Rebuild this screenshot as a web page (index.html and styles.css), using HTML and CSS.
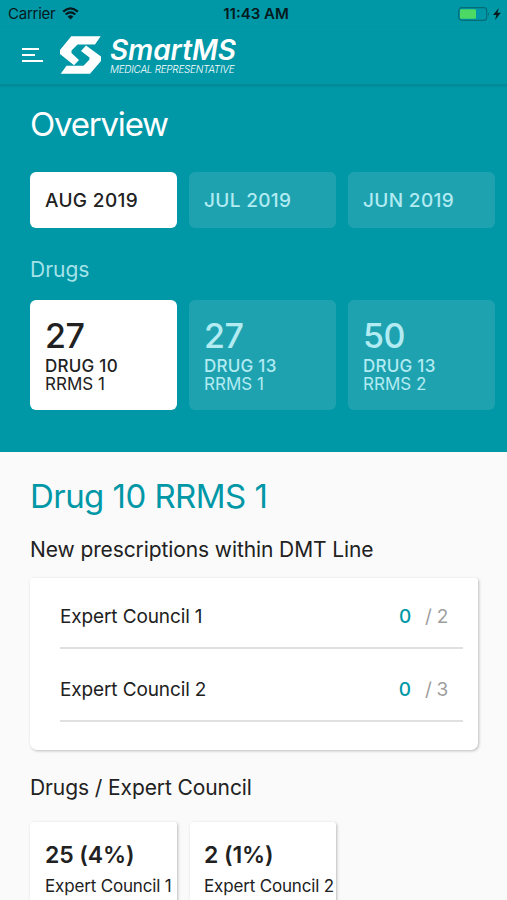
FILE: index.html
```
<!DOCTYPE html>
<html lang="en">

<head>
    <meta charset="UTF-8">
    <meta name="viewport" content="width=device-width, initial-scale=1.0">
    <title>SmartMS - Overview</title>

    <link rel="stylesheet" href="styles.css">
</head>

<body>

    <div class="status-bar">
        <div class="carrier">
            <span>Carrier</span>
            <svg width="17" height="13" viewBox="0 0 17 13">
                <path d="M1.2 4.7 Q8.5 -1.9 15.8 4.7" fill="none" stroke="#06191c" stroke-width="2.3" />
                <path d="M3.7 7.5 Q8.5 3.2 13.3 7.5" fill="none" stroke="#06191c" stroke-width="2.1" />
                <path d="M5.6 9.5 Q8.5 7 11.4 9.5 L8.5 12.4 Z" fill="#06191c" />
            </svg>
        </div>
        <span class="time">11:43 AM</span>
        <svg class="battery" width="44" height="14" viewBox="0 0 44 14">
            <rect x="0.7" y="0.7" width="28" height="12.6" rx="3" fill="none" stroke="#066d78" stroke-width="1.2" />
            <rect x="2" y="2.2" width="16" height="9.6" rx="1" fill="#4cd964" />
            <path d="M30 5 Q32 7 30 9 Z" fill="#066d78" />
            <path d="M40.8 1 L35 7.9 H38.4 L37 13 L42.8 5.8 H39.4 Z" fill="#06191c" />
        </svg>
    </div>

    <header class="navbar">
        <div class="menu">
            <span></span>
            <span class="short"></span>
            <span class="long"></span>
        </div>
        <svg class="logo" width="43" height="42" viewBox="0 0 43 42">
            <path d="M12.3 1.2 H41.7 L36 9.5 H18.5 L12.5 15.5 V18 L20 25 L15 30.2 L1 19 V15 Z" fill="#fff" />
            <path d="M27 10.5 L42 21.5 V26 L31 38.8 H1.7 L7.5 30.8 H24.5 L30.5 24.5 V22.5 L22 16 Z" fill="#fff" />
        </svg>
        <div class="brand">
            <span class="brand-name">SmartMS</span>
            <span class="brand-sub">MEDICAL REPRESENTATIVE</span>
        </div>
    </header>

    <section class="overview">
        <h1>Overview</h1>
        <div class="tiles">
            <div class="tile month active">AUG 2019</div>
            <div class="tile month">JUL 2019</div>
            <div class="tile month">JUN 2019</div>
        </div>
        <h2>Drugs</h2>
        <div class="tiles">
            <div class="tile drug active">
                <span class="count">27</span>
                <span class="drug-name">DRUG 10</span>
                <span class="drug-type">RRMS 1</span>
            </div>
            <div class="tile drug">
                <span class="count">27</span>
                <span class="drug-name">DRUG 13</span>
                <span class="drug-type">RRMS 1</span>
            </div>
            <div class="tile drug">
                <span class="count">50</span>
                <span class="drug-name">DRUG 13</span>
                <span class="drug-type">RRMS 2</span>
            </div>
        </div>
    </section>

    <main class="details">
        <h2 class="drug-title">Drug 10 RRMS 1</h2>
        <h3 class="lines-title">New prescriptions within DMT Line</h3>
        <div class="card">
            <div class="row">
                <span class="row-name">Expert Council 1</span>
                <span class="value">0</span>
                <span class="total">/ 2</span>
            </div>
            <div class="row">
                <span class="row-name">Expert Council 2</span>
                <span class="value">0</span>
                <span class="total">/ 3</span>
            </div>
        </div>
        <h3 class="council-title">Drugs / Expert Council</h3>
        <div class="tiles">
            <div class="stat">
                <span class="stat-value">25 (4%)</span>
                <span class="stat-name">Expert Council 1</span>
            </div>
            <div class="stat">
                <span class="stat-value">2 (1%)</span>
                <span class="stat-name">Expert Council 2</span>
            </div>
        </div>
    </main>

</body>

</html>
```

FILE: styles.css
```
* {
    box-sizing: border-box;
}

body {
    font-family: Inter, "Liberation Sans", sans-serif;
    margin: 0;
    height: 900px;
    overflow: hidden;
    background-color: #fafafa;
    color: #212121;
}

h1,
h2,
h3 {
    margin: 0;
    font-weight: 400;
    white-space: nowrap;
}

.status-bar {
    display: grid;
    grid-template-columns: 1fr auto 1fr;
    align-items: center;
    height: 27px;
    padding: 0 5px 0 8px;
    background-color: #0097a7;
    color: #06191c;
    font-size: 15px;
}

.carrier {
    display: flex;
    align-items: center;
    gap: 7px;
    letter-spacing: -0.25px;
}

.time {
    font-weight: 600;
    padding-left: 2px;
}

.battery {
    justify-self: end;
}

.navbar {
    display: flex;
    align-items: center;
    height: 58px;
    padding-left: 22px;
    background-color: #0097a7;
    border-bottom: 1px solid #068895;
    box-shadow: 0 1px 2px rgba(0, 0, 0, 0.12);
    position: relative;
}

.menu {
    display: flex;
    flex-direction: column;
    gap: 4px;
    width: 21px;
    margin: 0 16px 2px 0;
}

.menu span {
    width: 17px;
    height: 2px;
    background-color: #fff;
}

.menu .short {
    width: 13px;
}

.menu .long {
    width: 21px;
}

.brand {
    display: flex;
    flex-direction: column;
    margin-left: 8px;
    white-space: nowrap;
    font-style: italic;
}

.brand-name {
    font-size: 28px;
    font-weight: 600;
    line-height: 28px;
    letter-spacing: -0.1px;
}

.brand-name,
.brand-sub {
    color: #fff;
}

.brand-sub {
    font-size: 10px;
    font-weight: 300;
    line-height: 11px;
    letter-spacing: -0.3px;
}

.overview {
    height: 367px;
    padding: 19px 0 0 30px;
    background-color: #0097a7;
    color: #fff;
    overflow: hidden;
}

.overview h1 {
    font-size: 33px;
    line-height: 40px;
    letter-spacing: -1.2px;
}

.overview h2 {
    font-size: 21px;
    line-height: 26px;
    margin-top: 29px;
    color: #a5e3e9;
}

.tiles {
    display: flex;
    gap: 12px;
}

.tile {
    flex: none;
    width: 147px;
    padding: 0 15px;
    border-radius: 6px;
    background-color: #1fa2b0;
    color: #b2ebf2;
}

.tile.active {
    background-color: #fff;
    color: #212121;
}

.month {
    height: 56px;
    margin-top: 28px;
    font-size: 19px;
    font-weight: 500;
    line-height: 57px;
    letter-spacing: 0.35px;
}

.drug {
    display: flex;
    flex-direction: column;
    height: 110px;
    margin-top: 17px;
    padding-top: 15px;
}

.count {
    font-size: 34px;
    font-weight: 500;
    line-height: 42px;
    letter-spacing: -0.5px;
}

.drug-name {
    font-size: 17px;
    font-weight: 500;
    line-height: 19px;
    letter-spacing: 0.25px;
}

.drug-type {
    font-size: 17px;
    line-height: 16px;
}

.details {
    padding: 23px 29px 0 30px;
}

.drug-title {
    font-size: 33px;
    line-height: 42px;
    letter-spacing: -0.55px;
    color: #0097a7;
}

.lines-title,
.council-title {
    font-size: 21px;
    line-height: 26px;
    letter-spacing: -0.1px;
}

.lines-title {
    margin-top: 20px;
}

.card {
    height: 172px;
    margin-top: 15px;
    padding: 0 15px 0 30px;
    border-radius: 3px 3px 7px 7px;
    background-color: #fff;
    box-shadow: 1px 1px 3px rgba(0, 0, 0, 0.25);
}

.row {
    display: flex;
    align-items: center;
    height: 73px;
    padding: 10px 15px 0 0;
    border-bottom: 2px solid #e0e0e0;
    font-size: 19px;
    letter-spacing: -0.12px;
}

.row:first-child {
    height: 71px;
    padding-top: 7px;
}

.row-name {
    flex: 1;
}

.value {
    color: #0097a7;
    font-weight: 500;
    margin-right: 14px;
}

.total {
    color: #9e9e9e;
    letter-spacing: -0.3px;
}

.council-title {
    margin-top: 25px;
}

.details .tiles {
    margin-top: 21px;
    gap: 13px;
}

.stat {
    display: flex;
    flex-direction: column;
    flex: none;
    width: 147px;
    height: 110px;
    padding: 19px 0 0 15px;
    border-radius: 3px;
    background-color: #fff;
    box-shadow: 1px 1px 3px rgba(0, 0, 0, 0.25);
    white-space: nowrap;
}

.stat + .stat {
    width: 146px;
    padding-left: 14px;
}

.stat-value {
    font-size: 23px;
    font-weight: 600;
    line-height: 28px;
    letter-spacing: -0.1px;
}

.stat-name {
    font-size: 17px;
    line-height: 34px;
    letter-spacing: -0.17px;
}
```
